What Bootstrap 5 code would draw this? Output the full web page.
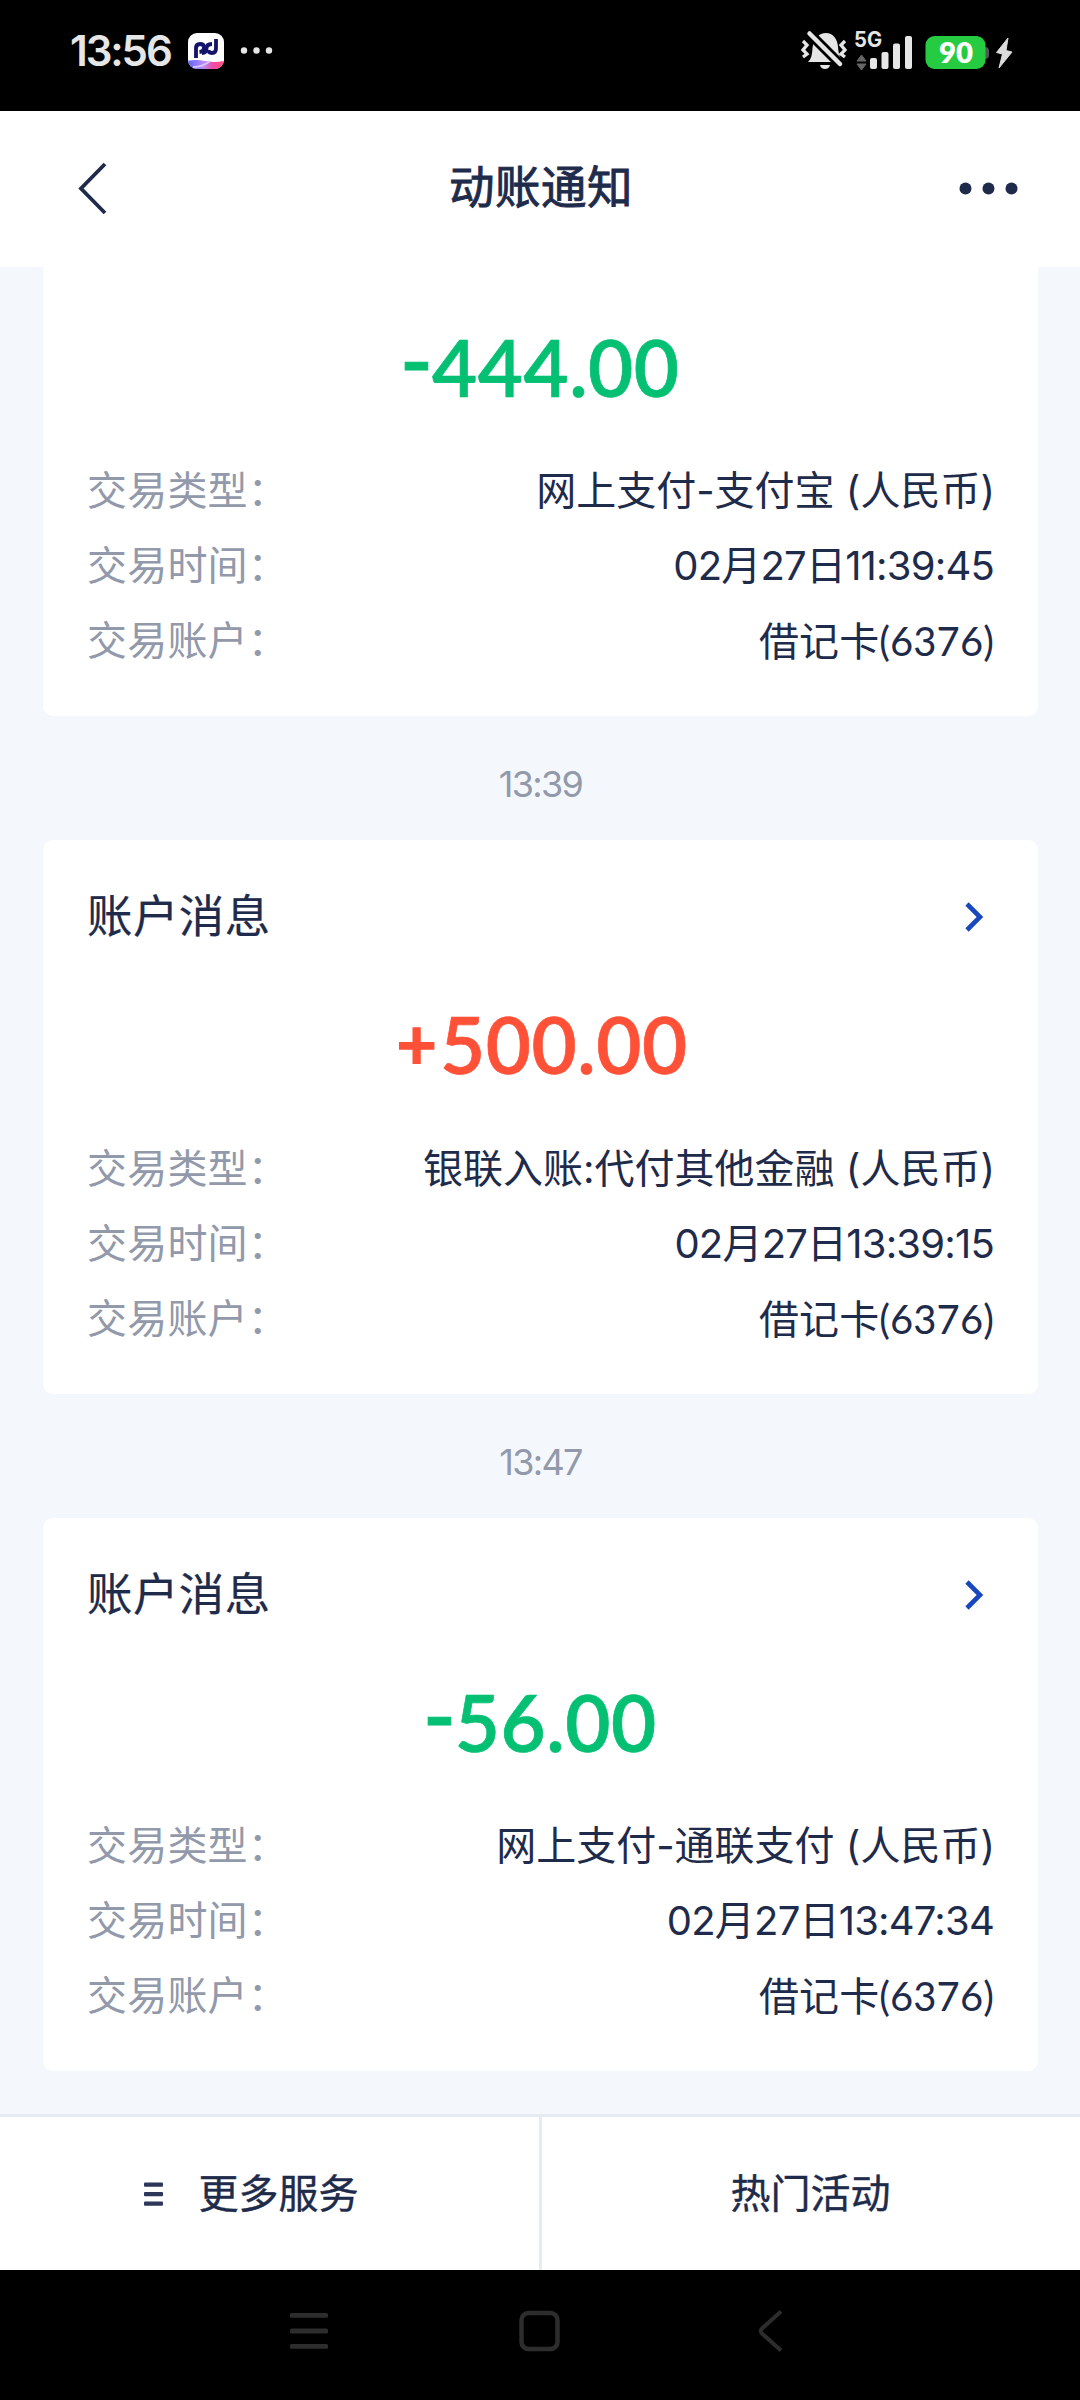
<!DOCTYPE html>
<html lang="zh-CN">
<head>
<meta charset="utf-8">
<meta name="viewport" content="width=device-width, initial-scale=1">
<title>动账通知</title>
<link href="https://cdn.jsdelivr.net/npm/bootstrap@5.3.0/dist/css/bootstrap.min.css" rel="stylesheet">
<style>
  :root { --ink:#1f2b4b; --muted:#9299aa; --page:#f4f8fd; --line:#e5ebf3; }
  body { font-family:Inter,"Noto Sans CJK SC",sans-serif; color:var(--ink); background:var(--page); font-size:40px; line-height:1; }
  svg { display:block; flex:none; }
  .screen { width:1080px; height:2400px; overflow:hidden; }
  .status-bar { height:111px; padding:0 67px 10px 70px; background:#000; color:#e6e6e6; }
  .clock { font-size:42px; font-weight:600; letter-spacing:-2.1px; }
  .top-bar { height:156px; padding:0 62px 0 76px; }
  .page-title { font-size:45.500px; letter-spacing:.5px; padding:0 12px 1px 0; -webkit-text-stroke:.9px currentColor; }
  .feed { padding:0 42px 0 43px; }
  .notice { border-radius:10px; height:553.500px; padding:0 43px 0 44px; }
  .notice-cut { height:449px; border-radius:0 0 10px 10px; }
  .notice-head { height:151px; padding-top:3px; padding-right:9px; font-size:45.500px; letter-spacing:.4px; -webkit-text-stroke:.2px currentColor; }
  .amount { font-family:Lato,sans-serif; font-weight:600; font-size:78px; height:106px; letter-spacing:.5px; -webkit-text-stroke:.7px currentColor; }
  .notice-cut .amount { height:200px; }
  .minus-sign { display:inline-block; transform:translateY(-8px) scale(1.15,1.1); }
  .plus-sign { display:inline-block; transform:translateY(-1px) scale(.88); -webkit-text-stroke:2.500px currentColor; }
  .amount-out { color:#05c073; }
  .amount-in { color:#ff5138; }
  .details { padding-top:34px; }
  .notice-cut .details { padding-top:0; margin-top:-14px; }
  .details > div { height:75px; }
  .details dt { font-weight:400; color:var(--muted); letter-spacing:.2px; }
  .details dd { white-space:nowrap; }
  .when { letter-spacing:-.8px; margin-right:1px !important; }
  .acct { font-family:Lato,"Noto Sans CJK SC",sans-serif; letter-spacing:.1px; margin-right:1px !important; }
  .stamp { height:124px; padding-bottom:14px; font-size:36px; color:var(--muted); letter-spacing:-1.7px; }
  .feed-end { height:43px; }
  .tabs-bar { height:156px; border-top:3px solid var(--line); -webkit-text-stroke:.4px currentColor; }
  .tabs-bar > div + div { border-left:3px solid var(--line); margin-left:-1px; }
  .more-tab { padding-right:39px; }
  .nav-keys { height:130px; background:#000; padding:0 296px 9px 288px; }
  .home-key { margin-right:9px; }
</style>
<script src="https://cdn.jsdelivr.net/npm/bootstrap@5.3.0/dist/js/bootstrap.bundle.min.js"></script>
</head>
<body>
<div class="screen d-flex flex-column">
  <header class="status-bar d-flex align-items-center justify-content-between flex-shrink-0">
    <div class="d-flex align-items-center">
      <span class="clock">13:56</span>
      <svg class="ms-3" width="88" height="40" viewBox="0 0 88 40">
        <defs>
          <linearGradient id="wave"><stop offset="0" stop-color="#5b62ff"/><stop offset=".45" stop-color="#b78cf5"/><stop offset=".7" stop-color="#f04aa8"/><stop offset="1" stop-color="#ff4f7b"/></linearGradient>
          <clipPath id="tile"><rect x="1" y="2" width="36" height="36" rx="9"/></clipPath>
        </defs>
        <g clip-path="url(#tile)">
          <rect y="2" width="37" height="36" fill="#fff"/>
          <path d="M0 30Q9 28 18 30T37 30V38H0Z" fill="url(#wave)"/>
          <path d="M6 36Q16 36 23 30" stroke="#d5c4ff" stroke-width="2" fill="none"/>
        </g>
        <g fill="none" stroke="#14136b" stroke-width="3.800"><path d="M9 27V17.500Q9 13 13 13Q17 13 17 16.500Q17 20.500 12.500 21"/><path d="M15 22Q19.500 22 19.500 17.500Q19.500 13 25 13"/><path d="M29 8V17.500Q29 22 25 22Q21.500 22 21.500 19"/></g>
        <g fill="#e6e6e6"><circle cx="57" cy="19.500" r="3.200"/><circle cx="69.500" cy="19.500" r="3.200"/><circle cx="82" cy="19.500" r="3.200"/></g>
      </svg>
    </div>
    <svg width="212" height="68" viewBox="0 -12 212 68">
      <g fill="#e6e6e6">
        <path d="M7 33C11 29 11 25 11.500 19C12.500 10 18 4 25 4C32 4 36.500 10 37 18C37.500 25 39 29 42 33Z"/>
        <path d="M19 36H29Q28 40 24 40Q20 40 19 36Z"/>
      </g>
      <path d="M6 2L42 38" stroke="#000" stroke-width="10"/>
      <path d="M8.500 4.500L39 35" stroke="#e6e6e6" stroke-width="4.500" stroke-linecap="round"/>
      <g fill="none" stroke="#e6e6e6" stroke-width="3.300"><path d="M2 12L6 16L2 21L6 25L2 28"/><path d="M44 12L40 16L44 21L40 25L44 28"/></g>
      <text x="53" y="18" font-family="Inter,sans-serif" font-weight="700" font-size="21" textLength="28" lengthAdjust="spacingAndGlyphs" fill="#e6e6e6">5G</text>
      <path d="M60.500 26L65 32H56ZM60.500 41L65 35H56Z" fill="#666" stroke="#666" stroke-width="1"/>
      <g fill="#e6e6e6"><rect x="69" y="29" width="7" height="11" rx="2"/><rect x="80.500" y="23" width="7" height="17" rx="2"/><rect x="92" y="14.500" width="7" height="25.500" rx="2"/><rect x="104" y="7" width="7" height="33" rx="2"/></g>
      <rect x="170" y="18" width="18" height="12" rx="4" fill="#555"/>
      <rect x="124.500" y="7" width="60" height="33" rx="9" fill="#25cb40"/>
      <text x="138" y="34" font-family="Lato,sans-serif" font-weight="800" font-size="29" textLength="34" lengthAdjust="spacingAndGlyphs" fill="#fff">90</text>
      <path d="M207 9L195.500 23.500L201.500 25L198 39L211 23L205 21.500Z" fill="#dcdcdc" stroke="#dcdcdc"/>
    </svg>
  </header>

  <nav class="top-bar bg-white d-flex align-items-center justify-content-between flex-shrink-0">
    <svg width="60" height="54" viewBox="0 0 60 54"><path d="M29 2L5 26.500L29 51" fill="none" stroke="#1f2b4b" stroke-width="3.800"/></svg>
    <h1 class="page-title m-0 fw-normal">动账通知</h1>
    <svg width="60" height="14" viewBox="0 0 60 14" fill="#1f2b4b"><circle cx="7.500" cy="6.500" r="6"/><circle cx="30.500" cy="6.500" r="6"/><circle cx="53.500" cy="6.500" r="6"/></svg>
  </nav>

  <main class="feed flex-shrink-0">
    <section class="notice notice-cut bg-white">
      <div class="amount amount-out d-flex align-items-center justify-content-center"><span class="minus-sign">-</span>444.00</div>
      <dl class="details mb-0">
        <div class="d-flex align-items-center justify-content-between"><dt>交易类型：</dt><dd class="m-0">网上支付-支付宝 (人民币)</dd></div>
        <div class="d-flex align-items-center justify-content-between"><dt>交易时间：</dt><dd class="m-0 when">02月27日11:39:45</dd></div>
        <div class="d-flex align-items-center justify-content-between"><dt>交易账户：</dt><dd class="m-0 acct">借记卡(6376)</dd></div>
      </dl>
    </section>

    <div class="stamp d-flex align-items-end justify-content-center"><span class="mb-4">13:39</span></div>

    <section class="notice bg-white">
      <div class="notice-head d-flex align-items-center justify-content-between">
        <span>账户消息</span>
        <svg width="22" height="30" viewBox="0 0 22 30"><path d="M3 2L16 15L3 28" fill="none" stroke="#1947bd" stroke-width="4.600"/></svg>
      </div>
      <div class="amount amount-in d-flex align-items-center justify-content-center"><span class="plus-sign">+</span>500.00</div>
      <dl class="details mb-0">
        <div class="d-flex align-items-center justify-content-between"><dt>交易类型：</dt><dd class="m-0">银联入账:代付其他金融 (人民币)</dd></div>
        <div class="d-flex align-items-center justify-content-between"><dt>交易时间：</dt><dd class="m-0 when">02月27日13:39:15</dd></div>
        <div class="d-flex align-items-center justify-content-between"><dt>交易账户：</dt><dd class="m-0 acct">借记卡(6376)</dd></div>
      </dl>
    </section>

    <div class="stamp d-flex align-items-end justify-content-center"><span class="mb-4">13:47</span></div>

    <section class="notice bg-white">
      <div class="notice-head d-flex align-items-center justify-content-between">
        <span>账户消息</span>
        <svg width="22" height="30" viewBox="0 0 22 30"><path d="M3 2L16 15L3 28" fill="none" stroke="#1947bd" stroke-width="4.600"/></svg>
      </div>
      <div class="amount amount-out d-flex align-items-center justify-content-center"><span class="minus-sign">-</span>56.00</div>
      <dl class="details mb-0">
        <div class="d-flex align-items-center justify-content-between"><dt>交易类型：</dt><dd class="m-0">网上支付-通联支付 (人民币)</dd></div>
        <div class="d-flex align-items-center justify-content-between"><dt>交易时间：</dt><dd class="m-0 when">02月27日13:47:34</dd></div>
        <div class="d-flex align-items-center justify-content-between"><dt>交易账户：</dt><dd class="m-0 acct">借记卡(6376)</dd></div>
      </dl>
    </section>
    <div class="feed-end"></div>
  </main>

  <div class="tabs-bar bg-white d-flex flex-shrink-0">
    <div class="more-tab w-50 d-flex align-items-center justify-content-center">
      <svg width="56" height="26" viewBox="0 0 56 26" fill="#2c3759"><rect x="1" y="1.500" width="19" height="4.300" rx="1"/><rect x="1" y="11" width="19" height="4.300" rx="1"/><rect x="1" y="20.500" width="19" height="4.300" rx="1"/></svg>
      <span>更多服务</span>
    </div>
    <div class="w-50 d-flex align-items-center justify-content-center"><span>热门活动</span></div>
  </div>

  <footer class="nav-keys d-flex align-items-center justify-content-between flex-shrink-0">
    <svg width="42" height="44" viewBox="0 0 42 44" fill="#2d2d2d"><rect x="2" y="4" width="38" height="4.800" rx="1.500"/><rect x="2" y="19.600" width="38" height="4.800" rx="1.500"/><rect x="2" y="35" width="38" height="4.800" rx="1.500"/></svg>
    <svg class="home-key" width="42" height="44" viewBox="0 0 42 44"><rect x="3.500" y="4" width="36" height="36" rx="7" fill="none" stroke="#2d2d2d" stroke-width="4.500"/></svg>
    <svg width="28" height="44" viewBox="0 0 28 44"><path d="M25 2.500L6 19.500Q3.500 22 6 24.500L25 41.500" fill="none" stroke="#2d2d2d" stroke-width="4"/></svg>
  </footer>
</div>
</body>
</html>
